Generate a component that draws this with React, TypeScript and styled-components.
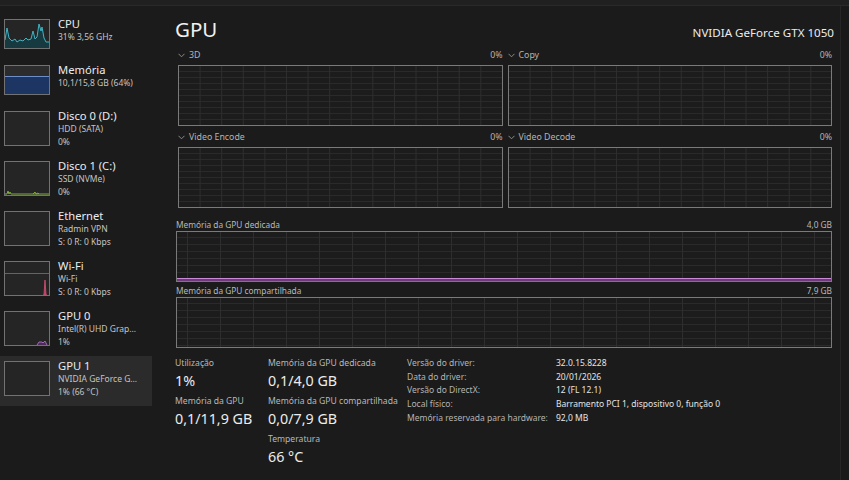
import React from 'react';
import styled, {createGlobalStyle} from "styled-components";

const GlobalStyle = createGlobalStyle`
    body {
        margin: 0;
        background: #1b1b1b;
        font-family: "Noto Sans", "Open Sans", sans-serif;
        color: #e8e8e8;
    }
`

type SideEntry = {
    title: string
    lines: string[]
    graph?: React.ReactNode
    active?: boolean
}

const cpuPoints = "0,20 2,8 4,18 7,21 10,19 12,22 15,20 18,21 21,18 23,20 26,19 28,11 30,19 32,17 34,4 36,11 37,7 39,18 41,22 44,22"

const sideEntries: SideEntry[] = [
    {
        title: "CPU",
        lines: ["31%  3,56 GHz"],
        graph: (
            <svg width="44" height="28" viewBox="0 0 44 28">
                <polygon points={`0,28 ${cpuPoints} 44,28`} fill="#173a40"/>
                <polyline points={cpuPoints} fill="none" stroke="#3fb4c4" strokeWidth="1"/>
            </svg>
        ),
    },
    {
        title: "Memória",
        lines: ["10,1/15,8 GB (64%)"],
        graph: (
            <svg width="44" height="28" viewBox="0 0 44 28">
                <rect x="0" y="0" width="44" height="10" fill="#2c2c2c"/>
                <rect x="0" y="10" width="44" height="18" fill="#1c3563"/>
                <line x1="0" y1="10.5" x2="44" y2="10.5" stroke="#6f8fc8" strokeWidth="1"/>
            </svg>
        ),
    },
    {title: "Disco 0 (D:)", lines: ["HDD (SATA)", "0%"]},
    {
        title: "Disco 1 (C:)",
        lines: ["SSD (NVMe)", "0%"],
        graph: (
            <svg width="44" height="33" viewBox="0 0 44 33">
                <polyline points="0,32 2,32 3,29 4,32 5,30 6,32 44,32" fill="none" stroke="#7fae3a" strokeWidth="1"/>
                <polyline points="28,32 30,30 31,32 33,31 34,32" fill="none" stroke="#7fae3a" strokeWidth="1"/>
            </svg>
        ),
    },
    {title: "Ethernet", lines: ["Radmin VPN", "S: 0 R: 0 Kbps"]},
    {
        title: "Wi-Fi",
        lines: ["Wi-Fi", "S: 0 R: 0 Kbps"],
        graph: (
            <svg width="44" height="33" viewBox="0 0 44 33">
                <line x1="0" y1="11.5" x2="44" y2="11.5" stroke="#a8435c" strokeWidth="1"/>
                <polyline points="38,33 39,33 40,18 41,33 42,33" fill="#c04a6a" stroke="#c04a6a" strokeWidth="1"/>
            </svg>
        ),
    },
    {
        title: "GPU 0",
        lines: ["Intel(R) UHD Grap...", "1%"],
        graph: (
            <svg width="44" height="33" viewBox="0 0 44 33">
                <polyline points="32,33 34,30 37,30 38,31 40,29 42,33" fill="#4a2c55" stroke="#a16ab4" strokeWidth="1"/>
            </svg>
        ),
    },
    {title: "GPU 1", lines: ["NVIDIA GeForce G...", "1%  (66 °C)"], active: true},
]

const engineCharts = [
    {name: "3D", value: "0%"},
    {name: "Copy", value: "0%"},
    {name: "Video Encode", value: "0%"},
    {name: "Video Decode", value: "0%"},
]

const details = [
    ["Versão do driver:", "32.0.15.8228"],
    ["Data do driver:", "20/01/2026"],
    ["Versão do DirectX:", "12 (FL 12.1)"],
    ["Local físico:", "Barramento PCI 1, dispositivo 0, função 0"],
    ["Memória reservada para hardware:", "92,0 MB"],
]

const Chevron = () => (
    <svg width="7" height="5" viewBox="0 0 7 5">
        <polyline points="0.5,0.8 3.5,3.8 6.5,0.8" fill="none" stroke="#8a8a8a" strokeWidth="1"/>
    </svg>
)

export default function App() {
    return (
        <>
            <GlobalStyle/>
            <Window>
                <TitleStrip/>
                <Body>
                    <Sidebar>
                        {sideEntries.map((e) => (
                            <SideItem key={e.title} $active={e.active} $tall={e.lines.length > 1}>
                                <Thumb $tall={e.lines.length > 1}>{e.graph}</Thumb>
                                <SideText>
                                    <SideTitle>{e.title}</SideTitle>
                                    {e.lines.map((l) => <SideLine key={l}>{l}</SideLine>)}
                                </SideText>
                            </SideItem>
                        ))}
                    </Sidebar>

                    <Main>
                        <Header>
                            <PageTitle>GPU</PageTitle>
                            <DeviceName>NVIDIA GeForce GTX 1050</DeviceName>
                        </Header>

                        <EngineGrid>
                            {engineCharts.map((c) => (
                                <div key={c.name}>
                                    <ChartLabel>
                                        <span><Chevron/>{c.name}</span>
                                        <span>{c.value}</span>
                                    </ChartLabel>
                                    <EngineChart/>
                                </div>
                            ))}
                        </EngineGrid>

                        <MemoryBlock $first>
                            <MemLabel>
                                <span>Memória da GPU dedicada</span>
                                <span>4,0 GB</span>
                            </MemLabel>
                            <MemChart>
                                <UsageBar/>
                            </MemChart>
                        </MemoryBlock>
                        <MemoryBlock>
                            <MemLabel>
                                <span>Memória da GPU compartilhada</span>
                                <span>7,9 GB</span>
                            </MemLabel>
                            <MemChart/>
                        </MemoryBlock>

                        <Stats>
                            <StatColumn>
                                <Stat>
                                    <StatLabel>Utilização</StatLabel>
                                    <StatValue>1%</StatValue>
                                </Stat>
                                <Stat>
                                    <StatLabel>Memória da GPU</StatLabel>
                                    <StatValue>0,1/11,9 GB</StatValue>
                                </Stat>
                            </StatColumn>
                            <StatColumn>
                                <Stat>
                                    <StatLabel>Memória da GPU dedicada</StatLabel>
                                    <StatValue>0,1/4,0 GB</StatValue>
                                </Stat>
                                <Stat>
                                    <StatLabel>Memória da GPU compartilhada</StatLabel>
                                    <StatValue>0,0/7,9 GB</StatValue>
                                </Stat>
                                <Stat>
                                    <StatLabel>Temperatura</StatLabel>
                                    <StatValue>66 °C</StatValue>
                                </Stat>
                            </StatColumn>
                            <DetailTable>
                                {details.map(([k, v]) => (
                                    <React.Fragment key={k}>
                                        <DetailKey>{k}</DetailKey>
                                        <DetailValue>{v}</DetailValue>
                                    </React.Fragment>
                                ))}
                            </DetailTable>
                        </Stats>
                    </Main>
                    <ScrollRail/>
                </Body>
            </Window>
        </>
    );
}

const Window = styled.div`
    width: 849px;
    height: 480px;
    overflow: hidden;
    display: flex;
    flex-direction: column;
`

const TitleStrip = styled.div`
    height: 5px;
    background: #202020;
    border-bottom: 1px solid #2a2a2a;
    flex-shrink: 0;
`

const Body = styled.div`
    flex: 1;
    display: flex;
`

const Sidebar = styled.div`
    width: 152px;
    flex-shrink: 0;
    padding-top: 8px;
    display: flex;
    flex-direction: column;
`

const SideItem = styled.div<{ $active?: boolean, $tall?: boolean }>`
    display: flex;
    align-items: flex-start;
    gap: 8px;
    height: ${p => p.$tall ? 50 : 46}px;
    padding: 5px 4px 0;
    box-sizing: border-box;
    background: ${p => p.$active ? "#2b2b2b" : "transparent"};
`

const Thumb = styled.div<{ $tall?: boolean }>`
    width: 44px;
    height: ${p => p.$tall ? 33 : 28}px;
    border: 1px solid #727272;
    background: #252525;
    flex-shrink: 0;
    display: flex;
    overflow: hidden;
`

const SideText = styled.div`
    display: flex;
    flex-direction: column;
    margin-top: -2px;
    white-space: nowrap;
`

const SideTitle = styled.span`
    font-size: 11.2px;
    line-height: 14px;
    color: #ececec;
`

const SideLine = styled.span`
    font-size: 8.5px;
    line-height: 12.5px;
    color: #c4c4c4;
`

const Main = styled.div`
    flex: 1;
    padding: 10px 6px 0 22px;
    display: flex;
    flex-direction: column;
`

const Header = styled.div`
    display: flex;
    justify-content: space-between;
    align-items: baseline;
    height: 32px;
    padding-left: 1px;
`

const PageTitle = styled.h1`
    margin: 0;
    font-size: 20.5px;
    font-weight: 400;
    line-height: 26px;
    color: #f0f0f0;
`

const DeviceName = styled.span`
    font-size: 11.6px;
    line-height: 20px;
    color: #ececec;
`

const EngineGrid = styled.div`
    display: grid;
    grid-template-columns: 1fr 1fr;
    column-gap: 5px;
    row-gap: 4px;
    padding-left: 4px;
    padding-right: 2px;
`

const ChartLabel = styled.div`
    display: flex;
    justify-content: space-between;
    align-items: center;
    height: 14px;
    margin-bottom: 3px;
    font-size: 8.8px;
    color: #b4b4b4;

    span {
        display: flex;
        align-items: center;
        gap: 4px;
    }
`

const gridLines = `
    background-color: #1c1c1c;
    background-image:
        linear-gradient(to right, #2e2e2e 1px, transparent 1px),
        linear-gradient(to bottom, #2a2a2a 1px, transparent 1px);
`

const EngineChart = styled.div`
    height: 59px;
    border: 1px solid #7a7a7a;
    ${gridLines}
    background-size: 21.6px 100%, 100% 6px;
    background-position: -1px 0, 0 5px;
`

const MemoryBlock = styled.div<{ $first?: boolean }>`
    margin-top: ${p => p.$first ? 10 : 2}px;
    padding-left: 2px;
    padding-right: 2px;
`

const MemLabel = styled.div`
    display: flex;
    justify-content: space-between;
    align-items: center;
    height: 12px;
    margin-bottom: 1px;
    font-size: 8.3px;
    color: #b8b8b8;
`

const MemChart = styled.div`
    position: relative;
    height: 49px;
    border: 1px solid #7a7a7a;
    ${gridLines}
    background-size: 33px 100%, 100% 7px;
    background-position: 10px 0, 0 5px;
`

const UsageBar = styled.div`
    position: absolute;
    left: 0;
    right: 0;
    bottom: 0;
    height: 2px;
    background: #6d3a7a;
    border-top: 1px solid #c98bd6;
`

const Stats = styled.div`
    display: grid;
    grid-template-columns: 93px 139px 1fr;
    padding-top: 8px;
    padding-left: 1px;
`

const StatColumn = styled.div`
    display: flex;
    flex-direction: column;
`

const Stat = styled.div`
    display: flex;
    flex-direction: column;
    margin-bottom: 3px;
`

const StatLabel = styled.span`
    font-size: 8.6px;
    line-height: 14px;
    color: #b8b8b8;
    white-space: nowrap;
`

const StatValue = styled.span`
    font-size: 14.3px;
    line-height: 21px;
    color: #ececec;
    white-space: nowrap;
`

const DetailTable = styled.div`
    display: grid;
    grid-template-columns: 149px auto;
    align-content: start;
    font-size: 8.5px;
    line-height: 13.7px;
`

const DetailKey = styled.span`
    color: #b4b4b4;
    white-space: nowrap;
`

const DetailValue = styled.span`
    color: #e4e4e4;
    white-space: nowrap;
`

const ScrollRail = styled.div`
    width: 8px;
    flex-shrink: 0;
    border-left: 1px solid #262626;
    background: #191919;
`
